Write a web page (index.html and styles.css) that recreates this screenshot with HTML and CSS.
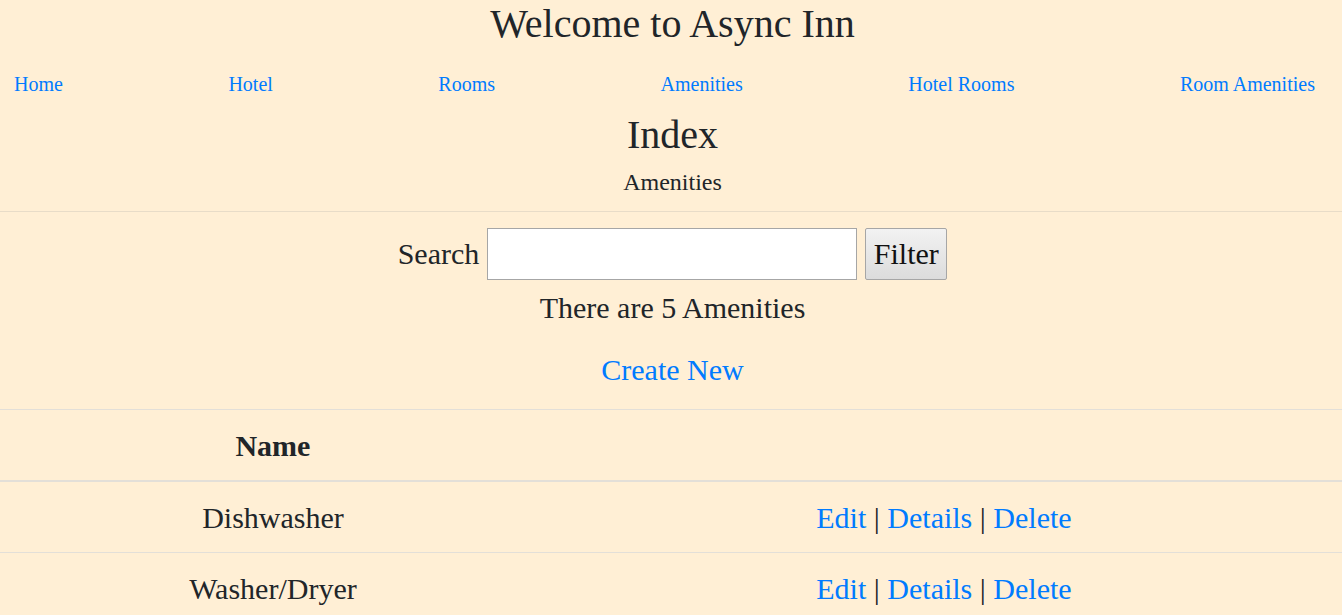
FILE: index.html
```html
<!DOCTYPE html>
<html lang="en">
<head>
<meta charset="utf-8">
<title>Index - Async Inn</title>
<link rel="stylesheet" href="styles.css">
</head>
<body>
<header class="site-header">
  <h1 class="site-title">Welcome to Async Inn</h1>
  <nav class="site-nav">
    <a href="#">Home</a>
    <a href="#">Hotel</a>
    <a href="#">Rooms</a>
    <a href="#">Amenities</a>
    <a href="#">Hotel Rooms</a>
    <a href="#">Room Amenities</a>
  </nav>
  <h2 class="page-title">Index</h2>
  <p class="page-sub">Amenities</p>
</header>
<main class="content">
  <form class="search" onsubmit="return false">
    <label class="search-label" for="q">Search</label>
    <input class="search-input" id="q" type="text">
    <button class="search-btn" type="submit">Filter</button>
  </form>
  <p class="count">There are 5 Amenities</p>
  <p class="create"><a href="#">Create New</a></p>
  <table class="table">
    <thead>
      <tr><th>Name</th><th></th></tr>
    </thead>
    <tbody>
      <tr>
        <td>Dishwasher</td>
        <td><a href="#">Edit</a> | <a href="#">Details</a> | <a href="#">Delete</a></td>
      </tr>
      <tr>
        <td>Washer/Dryer</td>
        <td><a href="#">Edit</a> | <a href="#">Details</a> | <a href="#">Delete</a></td>
      </tr>
    </tbody>
  </table>
</main>
</body>
</html>
```
FILE: styles.css
```css
html, body {
  margin: 0;
  padding: 0;
}
body {
  background: #ffefd5;
  color: #212529;
  font-family: "Liberation Serif", "Times New Roman", serif;
  text-align: center;
}
a {
  color: #007bff;
  text-decoration: none;
}
.site-header {
  border-bottom: 1px solid #e8dcc8;
  padding: 0 0 11px 3px;
}
.site-title {
  margin: 0;
  font-size: 40px;
  font-weight: normal;
  line-height: 48px;
}
.site-nav {
  display: flex;
  justify-content: space-between;
  margin-top: 21px;
  padding: 0 27px 0 11px;
  font-size: 20px;
  line-height: 30px;
}
.page-title {
  margin: 12px 0 0;
  font-size: 40px;
  font-weight: normal;
  line-height: 48px;
}
.page-sub {
  margin: 5px 0 0;
  font-size: 24px;
  line-height: 36px;
}
.content {
  padding-top: 16px;
}
.search {
  display: flex;
  justify-content: center;
  align-items: center;
  gap: 8px;
  height: 52px;
  padding-left: 3px;
  font-size: 30px;
}
.search-label {
  font-size: 30px;
}
.search-input {
  box-sizing: border-box;
  width: 370px;
  height: 52px;
  margin: 0;
  background: #fff;
  border: 1px solid #a6a6a6;
  font-family: inherit;
  font-size: 30px;
}
.search-btn {
  box-sizing: border-box;
  width: 82px;
  height: 52px;
  margin: 0;
  padding: 0;
  border: 1px solid #a6a6a6;
  border-radius: 2px;
  background: linear-gradient(#f2f2f2, #dcdcdc);
  color: #111;
  font-family: inherit;
  font-size: 30px;
}
.count {
  margin: 5px 0 0;
  padding-left: 3px;
  font-size: 30px;
  line-height: 45px;
}
.create {
  margin: 17px 0 0;
  padding-left: 3px;
  font-size: 30px;
  line-height: 45px;
}
.table {
  width: 100%;
  margin-top: 17px;
  border-collapse: collapse;
  font-size: 30px;
  line-height: 45px;
}
.table th,
.table td {
  padding: 13px 12px 12px;
  border-top: 1px solid #e3dfd8;
  text-align: center;
  vertical-align: top;
}
.table th {
  font-weight: bold;
  border-bottom: 2px solid #e3dfd8;
}
.table tbody tr:first-child td {
  border-top: 2px solid #e3dfd8;
}
```
